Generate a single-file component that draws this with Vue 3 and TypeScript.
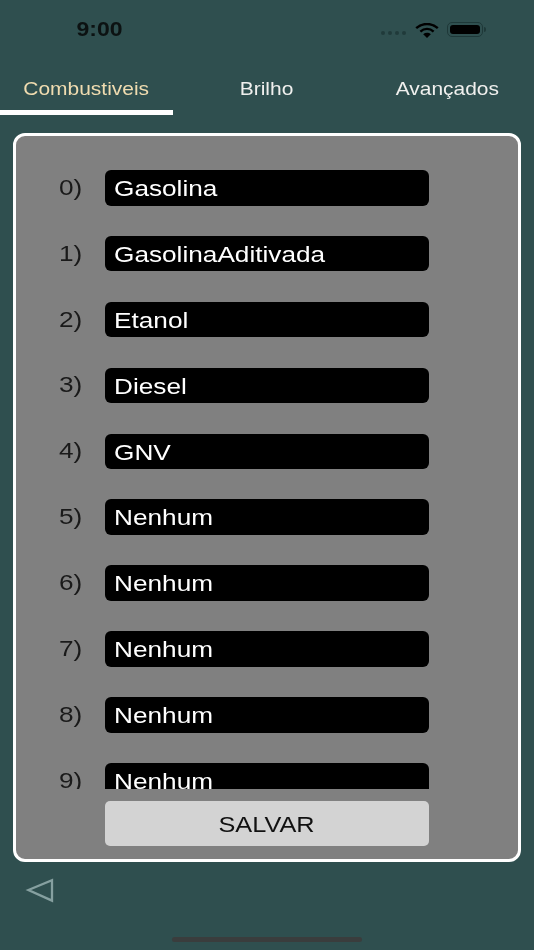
<script setup lang="ts">
const tabs = [
  { label: 'Combustiveis', active: true },
  { label: 'Brilho', active: false },
  { label: 'Avançados', active: false },
]
const fuels: string[] = [
  'Gasolina', 'GasolinaAditivada', 'Etanol', 'Diesel', 'GNV',
  'Nenhum', 'Nenhum', 'Nenhum', 'Nenhum', 'Nenhum',
]
</script>

<template>
  <div class="screen">
    <header class="status">
      <span class="time"><span class="wide">9:00</span></span>
      <div class="status-icons">
        <div class="signal"><i></i><i></i><i></i><i></i></div>
        <svg class="wifi" viewBox="0 0 24 15" width="24" height="15" aria-hidden="true">
          <path d="M1.2 5.2C7.2-.4 16.8-.4 22.8 5.2" fill="none" stroke="#000" stroke-width="2.4" />
          <path d="M5.4 8.6C9.2 5 14.8 5 18.6 8.6" fill="none" stroke="#000" stroke-width="2.4" />
          <path d="M8.2 11.2 12 15l3.8-3.8C13.6 9.4 10.4 9.4 8.2 11.2Z" fill="#000" />
        </svg>
        <div class="battery"><div class="battery-fill"></div></div>
        <div class="battery-nub"></div>
      </div>
    </header>

    <nav class="tabs">
      <div v-for="tab in tabs" :key="tab.label" class="tab" :class="{ active: tab.active }">
        <span class="wide">{{ tab.label }}</span>
      </div>
    </nav>

    <section class="panel">
      <div class="list">
        <div v-for="(fuel, i) in fuels" :key="i" class="row">
          <span class="index"><span class="wide left">{{ i }})</span></span>
          <div class="field"><span class="wide left">{{ fuel }}</span></div>
        </div>
      </div>
      <div class="actions">
        <button class="save" type="button"><span class="wide">SALVAR</span></button>
      </div>
    </section>

    <div class="back">
      <svg viewBox="0 0 30 28" width="30" height="28" aria-hidden="true">
        <path d="M3.4 13 27 3.2v20.4Z" fill="none" stroke="#86a0a0" stroke-width="2.3" />
      </svg>
    </div>

    <div class="home-wrap"><div class="home"></div></div>
  </div>
</template>

<style>
html, body { margin: 0; background: #2f4f4f; }
</style>

<style scoped>
.screen {
  width: 534px;
  height: 950px;
  background: #2f4f4f;
  display: flex;
  flex-direction: column;
  font-family: "Liberation Sans", Arial, sans-serif;
  overflow: hidden;
  filter: blur(0.35px);
}
.wide {
  display: inline-block;
  transform: scaleX(1.17);
  white-space: nowrap;
}
.wide.left { transform-origin: left center; }

.status {
  height: 64px;
  flex: none;
  display: flex;
  align-items: flex-start;
  justify-content: space-between;
  box-sizing: border-box;
  padding: 19px 48px 0 77px;
}
.time {
  font-size: 19.5px;
  line-height: 21px;
  font-weight: 700;
  color: #0c1212;
  width: 46px;
  text-align: center;
}
.time .wide { transform: scaleX(1.18); }
.status-icons {
  display: flex;
  align-items: flex-start;
  padding-top: 3px;
}
.signal {
  display: flex;
  gap: 3px;
  margin-top: 9px;
  margin-right: 9px;
}
.signal i {
  width: 4px;
  height: 4px;
  border-radius: 50%;
  background: #203a3a;
}
.wifi { margin-right: 8px; margin-top: 1px; }
.battery {
  width: 36px;
  height: 15px;
  box-sizing: border-box;
  border: 1.5px solid #1e3838;
  border-radius: 5px;
  padding: 2px;
}
.battery-fill {
  width: 100%;
  height: 100%;
  border-radius: 3px;
  background: #000;
}
.battery-nub {
  width: 2px;
  height: 5px;
  margin: 5px 0 0 1px;
  background: #1e3838;
  border-radius: 0 2px 2px 0;
}

.tabs {
  flex: none;
  display: grid;
  grid-template-columns: 173px 187px 174px;
  height: 51px;
}
.tab {
  text-align: center;
  font-size: 18.4px;
  line-height: 20px;
  padding-top: 15px;
  box-sizing: border-box;
  color: #f0f0ee;
}
.tab .wide { transform: scaleX(1.14); }
.tab.active {
  color: #f0dcb0;
  border-bottom: 5px solid #fff;
}

.panel {
  flex: none;
  margin: 18px 13px 0;
  height: 729px;
  box-sizing: border-box;
  background: #808080;
  border: 3px solid #fff;
  border-radius: 12px;
  display: flex;
  flex-direction: column;
}
.list {
  height: 653px;
  flex: none;
  overflow: hidden;
  padding: 34px 0 0 43px;
  box-sizing: border-box;
}
.row {
  display: flex;
  align-items: center;
  height: 35.6px;
  margin-bottom: 30.3px;
}
.index {
  width: 46px;
  flex: none;
  font-size: 22.4px;
  line-height: 38px;
  color: #1a1a1a;
}
.field {
  width: 324px;
  height: 35.6px;
  box-sizing: border-box;
  background: #000;
  color: #fff;
  border-radius: 6px;
  padding-left: 9px;
  font-size: 22.4px;
  line-height: 37px;
  overflow: hidden;
}
.actions {
  padding: 12px 0 0 89px;
}
.save {
  display: block;
  width: 324px;
  height: 45px;
  padding: 2px 0 0;
  border: none;
  border-radius: 5px;
  background: #d3d3d3;
  color: #111;
  font-family: inherit;
  font-size: 22.4px;
}
.save .wide { transform: scaleX(1.13); }

.back {
  flex: none;
  height: 58px;
  padding: 15px 0 0 25px;
  box-sizing: border-box;
}
.back svg { display: block; }

.home-wrap {
  flex: none;
  display: flex;
  padding: 17px 0 0 172px;
}
.home {
  width: 190px;
  height: 4.5px;
  border-radius: 3px;
  background: #3a3d3d;
}
</style>
